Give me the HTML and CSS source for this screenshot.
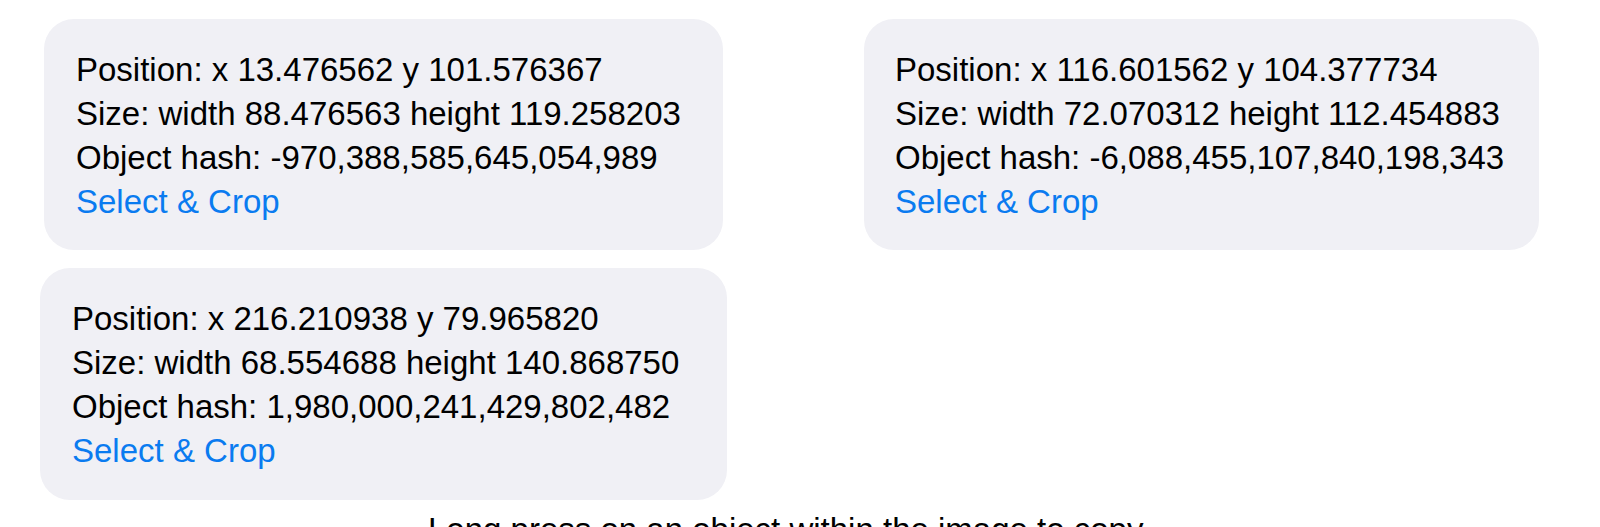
FILE: index.html
```html
<!DOCTYPE html>
<html lang="en">
<head>
<meta charset="utf-8">
<title>Objects</title>
<link rel="stylesheet" href="styles.css">
</head>
<body>
<main class="page">
  <div class="row row--first">
    <div class="card card--a">
      <div class="line">Position: x 13.476562 y 101.576367</div>
      <div class="line">Size: width 88.476563 height 119.258203</div>
      <div class="line">Object hash: -970,388,585,645,054,989</div>
      <div class="line link">Select &amp; Crop</div>
    </div>
    <div class="card card--b">
      <div class="line">Position: x 116.601562 y 104.377734</div>
      <div class="line">Size: width 72.070312 height 112.454883</div>
      <div class="line">Object hash: -6,088,455,107,840,198,343</div>
      <div class="line link">Select &amp; Crop</div>
    </div>
  </div>
  <div class="row row--second">
    <div class="card card--c">
      <div class="line">Position: x 216.210938 y 79.965820</div>
      <div class="line">Size: width 68.554688 height 140.868750</div>
      <div class="line">Object hash: 1,980,000,241,429,802,482</div>
      <div class="line link">Select &amp; Crop</div>
    </div>
  </div>
  <p class="hint">Long press on an object within the image to copy</p>
</main>
</body>
</html>
```

FILE: styles.css
```css
html, body {
  margin: 0;
  padding: 0;
  background: #ffffff;
}

body {
  font-family: "Liberation Sans", Arial, sans-serif;
  font-size: 33px;
  color: #000000;
  overflow: hidden;
}

.page {
  display: flex;
  flex-direction: column;
  padding-top: 19px;
}

.row {
  display: flex;
}

.row--first {
  padding-left: 44px;
  gap: 141px;
}

.row--second {
  margin-top: 18px;
  padding-left: 40px;
}

.card {
  background: #f0f0f5;
  border-radius: 30px;
  padding: 29px 0 26px 32px;
  box-sizing: border-box;
  height: 231px;
}

.card--a { width: 679px; }
.card--b { width: 675px; padding-left: 31px; }
.card--c { width: 687px; height: 232px; }

.line {
  line-height: 44px;
  white-space: nowrap;
}

.link {
  color: #0a7bf0;
}

.hint {
  margin: 8px 0 0 428px;
  line-height: 44px;
  white-space: nowrap;
}
```
